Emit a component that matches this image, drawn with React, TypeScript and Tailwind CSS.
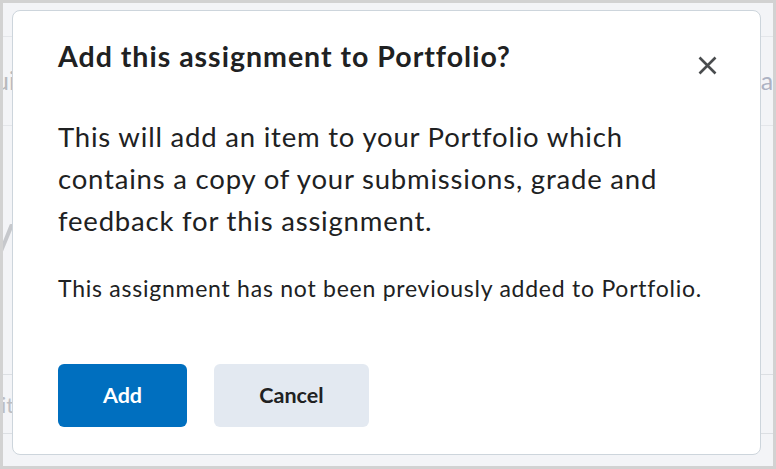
import React from 'react';

const font = { fontFamily: 'Lato, "Noto Sans", sans-serif' };

const CloseIcon: React.FC = () => (
  <svg width="19" height="19" viewBox="0 0 19 19" fill="none">
    <path d="M1.5 1.5 L17.5 17.5 M17.5 1.5 L1.5 17.5" stroke="#494c4e" strokeWidth="2.6" />
  </svg>
);

// the page that sits faded behind the dialog
const Backdrop: React.FC = () => (
  <div className="flex flex-col h-full text-[#b8b9bc]">
    <div className="h-[34px] border-b border-[#e4e6ea]" />
    <div className="h-[89px] border-b border-[#e4e6ea] flex items-center justify-between">
      <span className="-ml-[8px] text-[25px]">ui</span>
      <span className="-mr-[6px] text-[25px] text-[#adb2c3]">al</span>
    </div>
    <div className="h-[249px] border-b border-[#dcdfe3] pt-[80px]">
      <span className="block -ml-[14px] text-[50px] leading-[50px] text-[#c6c8cc]">y</span>
    </div>
    <div className="h-[59px] border-b border-[#dcdfe3] flex items-center">
      <span className="-ml-[2px] text-[22px] text-[#bcbec4]">it</span>
    </div>
  </div>
);

const App: React.FC = () => {
  return (
    <div
      className="relative w-[776px] h-[469px] overflow-hidden border-[3px] border-[#d2d2d2] bg-[#f3f4f7]"
      style={font}
    >
      <Backdrop />

      <div className="absolute inset-0 pl-[9px] pt-[7px]">
        <div className="w-[749px] h-[445px] rounded-[8px] border border-[#cdd5dc] bg-white pl-[45px] pr-[43px] pt-[27px]">
          <div className="flex items-start justify-between">
            <h2 className="text-[28.5px] leading-[36px] font-bold tracking-[1px] text-[#202122]">
              Add this assignment to Portfolio?
            </h2>
            <button className="mt-[18px] flex items-center justify-center">
              <CloseIcon />
            </button>
          </div>
          <p className="mt-[41px] w-[650px] text-[27.5px] leading-[42px] tracking-[0.8px] text-[#202122]">
            This will add an item to your Portfolio which contains a copy of your submissions, grade and
            feedback for this assignment.
          </p>
          <p className="mt-[31px] text-[23px] leading-[30px] tracking-[0.75px] text-[#202122]">
            This assignment has not been previously added to Portfolio.
          </p>
          <div className="mt-[61px] flex gap-[27px]">
            <button className="w-[129px] h-[63px] rounded-[6px] bg-[#006fbf] text-white text-[21.5px] font-bold">
              Add
            </button>
            <button className="w-[155px] h-[63px] rounded-[6px] bg-[#e3e9f1] text-[#202122] text-[21.5px] font-bold">
              Cancel
            </button>
          </div>
        </div>
      </div>
    </div>
  );
};

export default App;
